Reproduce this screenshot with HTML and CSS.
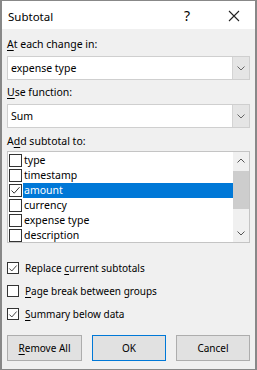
FILE: index.html
```html
<!DOCTYPE html>
<html>
<head>
    <link rel="stylesheet" href="styles.css">
</head>
<body>
    <div class="window">
        <div class="titlebar">
            <span class="title">Subtotal</span>
            <span class="help">?</span>
            <svg class="close" width="12" height="12" viewBox="0 0 12 12">
                <path d="M1 1 L11 11 M11 1 L1 11" stroke="#222" stroke-width="1.1" fill="none"/>
            </svg>
        </div>
        <div class="content">
            <div class="label first"><u>A</u>t each change in:</div>
            <div class="combo">
                <span class="combo-text">expense type</span>
                <span class="combo-btn">
                    <svg width="8" height="5" viewBox="0 0 8 5"><path d="M0.5 0.5 L4 4 L7.5 0.5" stroke="#666" fill="none"/></svg>
                </span>
            </div>

            <div class="label"><u>U</u>se function:</div>
            <div class="combo">
                <span class="combo-text">Sum</span>
                <span class="combo-btn">
                    <svg width="8" height="5" viewBox="0 0 8 5"><path d="M0.5 0.5 L4 4 L7.5 0.5" stroke="#666" fill="none"/></svg>
                </span>
            </div>

            <div class="label list-label">A<u>d</u>d subtotal to:</div>
            <div class="listbox">
                <div class="items">
                    <div class="item"><span class="box"></span><span class="item-text">type</span></div>
                    <div class="item"><span class="box"></span><span class="item-text">timestamp</span></div>
                    <div class="item selected"><span class="box">
                        <svg width="11" height="11" viewBox="0 0 11 11"><path d="M1.5 5.5 L4.2 8.2 L9.5 2.2" stroke="#333" stroke-width="1" fill="none"/></svg>
                    </span><span class="item-text">amount</span></div>
                    <div class="item"><span class="box"></span><span class="item-text">currency</span></div>
                    <div class="item"><span class="box"></span><span class="item-text">expense type</span></div>
                    <div class="item"><span class="box"></span><span class="item-text">description</span></div>
                </div>
                <div class="scrollbar">
                    <svg class="arrow" width="8" height="5" viewBox="0 0 8 5"><path d="M0.5 4.5 L4 1 L7.5 4.5" stroke="#555" fill="none"/></svg>
                    <div class="track"><div class="thumb"></div></div>
                    <svg class="arrow" width="8" height="5" viewBox="0 0 8 5"><path d="M0.5 0.5 L4 4 L7.5 0.5" stroke="#555" fill="none"/></svg>
                </div>
            </div>

            <div class="options">
                <div class="option"><span class="box">
                    <svg width="11" height="11" viewBox="0 0 11 11"><path d="M1.5 5.5 L4.2 8.2 L9.5 2.2" stroke="#333" stroke-width="1" fill="none"/></svg>
                </span><span>Replace <u>c</u>urrent subtotals</span></div>
                <div class="option"><span class="box"></span><span><u>P</u>age break between groups</span></div>
                <div class="option"><span class="box">
                    <svg width="11" height="11" viewBox="0 0 11 11"><path d="M1.5 5.5 L4.2 8.2 L9.5 2.2" stroke="#333" stroke-width="1" fill="none"/></svg>
                </span><span><u>S</u>ummary below data</span></div>
            </div>

            <div class="buttons">
                <button class="btn wide"><u>R</u>emove All</button>
                <button class="btn default">OK</button>
                <button class="btn">Cancel</button>
            </div>
        </div>
    </div>
</body>
</html>
```
FILE: styles.css
```css
body {
    margin: 0;
    font-family: "Noto Sans", "Open Sans", sans-serif;
    font-size: 10.5px;
    color: #000;
}
.window {
    width: 257px;
    height: 370px;
    box-sizing: border-box;
    border: 1px solid #888;
    border-left-width: 2px;
    border-right-width: 2px;
    background: #f0f0f0;
    display: flex;
    flex-direction: column;
}
.titlebar {
    height: 28px;
    background: #fff;
    display: flex;
    align-items: center;
    padding-left: 6px;
}
.title {
    font-size: 11.5px;
    flex: 1;
    margin-top: 2px;
}
.help {
    font-size: 14px;
    width: 10px;
    margin-right: 34px;
    margin-top: 1px;
}
.close {
    margin-right: 15px;
    margin-top: 2px;
}
.content {
    padding: 0 5px 0 5px;
}
.label {
    height: 16px;
    line-height: 16px;
    margin-top: 4px;
    margin-bottom: 4px;
}
.label.first {
    margin-top: 7px;
}
.list-label {
    margin-top: 5px;
    margin-bottom: 2px;
}
.combo {
    height: 24px;
    box-sizing: border-box;
    border: 1px solid #cfcfcf;
    background: #fff;
    display: flex;
    align-items: stretch;
}
.combo-text {
    flex: 1;
    line-height: 22px;
    padding-left: 3px;
}
.combo-btn {
    width: 16px;
    background: #e5e5e5;
    border-left: 1px solid #d4d4d4;
    display: flex;
    align-items: center;
    justify-content: center;
}
.listbox {
    height: 92px;
    box-sizing: border-box;
    border: 1px solid #c4c4c4;
    background: #fff;
    display: flex;
    overflow: hidden;
}
.items {
    flex: 1;
    padding-top: 1px;
    padding-left: 1px;
}
.item {
    height: 15px;
    display: flex;
    align-items: center;
}
.item .box {
    width: 13px;
    height: 13px;
    margin-right: 1px;
}
.item-text {
    flex: 1;
    height: 15px;
    line-height: 15px;
    padding-left: 1px;
}
.selected .item-text {
    background: #0078d7;
    color: #fff;
}
.box {
    width: 12px;
    height: 12px;
    box-sizing: border-box;
    border: 1px solid #333;
    background: #fff;
    display: flex;
    align-items: center;
    justify-content: center;
    flex-shrink: 0;
}
.scrollbar {
    width: 16px;
    background: #f0f0f0;
    display: flex;
    flex-direction: column;
    align-items: center;
}
.arrow {
    margin: 6px 0;
}
.track {
    flex: 1;
    width: 100%;
}
.thumb {
    margin-top: 2px;
    height: 38px;
    background: #cdcdcd;
}
.options {
    margin-top: 19px;
}
.option {
    display: flex;
    align-items: center;
    height: 12px;
    margin-bottom: 11px;
    font-size: 10px;
}
.option .box {
    margin-right: 6px;
}
.buttons {
    display: flex;
    justify-content: space-between;
    margin-top: 15px;
}
.btn {
    width: 74px;
    height: 26px;
    font-family: inherit;
    font-size: 10px;
    background: #e1e1e1;
    border: 1px solid #adadad;
    padding: 0;
    color: #000;
}
.btn.wide {
    width: 75px;
}
.btn.default {
    border-color: #0078d7;
}
u {
    text-decoration-thickness: 1px;
    text-underline-offset: 2px;
}
```
